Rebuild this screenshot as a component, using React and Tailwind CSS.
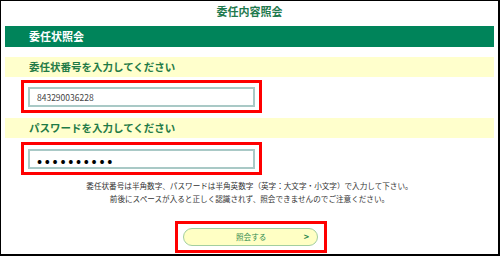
import React, { useState } from "react";

const font = { fontFamily: '"Noto Sans CJK JP", "Noto Sans", sans-serif' };

const SectionLabel = ({ children, className }) => (
  <div
    className={`h-[20px] bg-[#ffffcc] pl-[24px] flex items-center text-[10.5px] font-bold text-[#1f7a46] ${className}`}
  >
    {children}
  </div>
);

const RedBox = ({ children, className }) => (
  <div className={`border-[3px] border-[#ff0000] ${className}`}>{children}</div>
);

const App = () => {
  const [num, setNum] = useState("843290036228");
  const [password, setPassword] = useState("abcdefghij");

  return (
    <div
      className="w-[500px] h-[256px] bg-white border-l border-t border-r-2 border-b-2 border-black flex flex-col px-[4px] overflow-hidden"
      style={font}
    >
      <div className="h-[25px] pt-[1px] text-center text-[11px] font-bold leading-[18px] text-[#1f7a4e]">
        委任内容照会
      </div>
      <div className="h-[21px] bg-[#00845a] pl-[24px] flex items-center text-[11px] font-bold text-white">
        委任状照会
      </div>

      <SectionLabel className="mt-[10px]">委任状番号を入力してください</SectionLabel>
      <RedBox className="ml-[16px] mt-[3px] w-[241px] h-[33px] p-[4px]">
        <input
          className="block w-[227px] h-[20px] border-2 border-[#a9c9c6] pl-[7px] text-[8.5px] text-[#444] outline-none"
          value={num}
          onChange={(e) => setNum(e.target.value)}
        />
      </RedBox>

      <SectionLabel className="mt-[5px]">パスワードを入力してください</SectionLabel>
      <RedBox className="ml-[16px] mt-[4px] w-[241px] h-[33px] p-[4px]">
        <input
          type="password"
          className="block w-[227px] h-[20px] border-2 border-[#a9c9c6] pl-[7px] text-[15px] leading-none tracking-[2.7px] text-black outline-none"
          value={password}
          onChange={(e) => setPassword(e.target.value)}
        />
      </RedBox>

      <div className="mt-[4px] text-center text-[7.6px] leading-[13px] text-[#333]">
        <p>委任状番号は半角数字、パスワードは半角英数字（英字：大文字・小文字）で入力して下さい。</p>
        <p>前後にスペースが入ると正しく認識されず、照会できませんのでご注意ください。</p>
      </div>

      <RedBox className="ml-[170px] mt-[16px] w-[152px] h-[32px] pt-[4px] pl-[5px]">
        <button className="w-[135px] h-[18px] rounded-full border border-[#a3cf9f] bg-[#ffffc4] flex items-center pl-[52px] pr-[8px] text-[7.6px] text-[#2f8a4e]">
          <span>照会する</span>
          <span className="ml-auto text-[9px] font-bold">&gt;</span>
        </button>
      </RedBox>
    </div>
  );
};

export default App;
